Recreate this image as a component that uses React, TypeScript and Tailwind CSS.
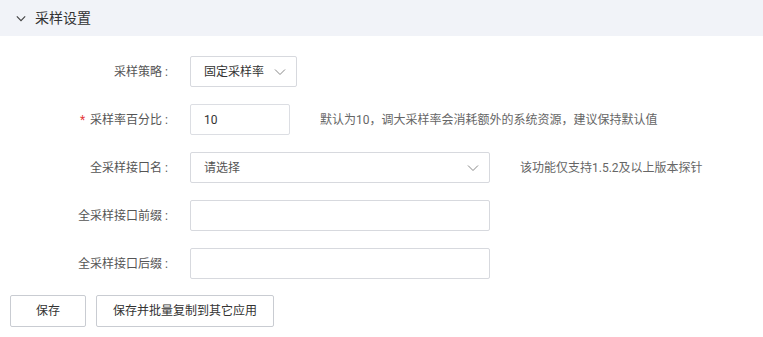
import React from "react";

const Chevron = ({ className, sw = 1 }: { className?: string; sw?: number }) => (
  <svg className={className} width="12" height="8" viewBox="0 0 12 8" fill="none">
    <path d="M1 1.5 L6 6.5 L11 1.5" stroke="currentColor" strokeWidth={sw} />
  </svg>
);

const Row = ({
  label,
  required,
  children,
}: {
  label: string;
  required?: boolean;
  children: React.ReactNode;
}) => (
  <div className="flex items-center h-[31px]">
    <div className="w-[168px] shrink-0 text-right text-[12px] text-[#555]">
      {required && <span className="text-[#e4393c] mr-[5px]">*</span>}
      {label}
      <span className="ml-[3px]">:</span>
    </div>
    <div className="ml-[22px] flex items-center">{children}</div>
  </div>
);

export default function App() {
  return (
    <div
      className="w-[763px] h-[337px] bg-white overflow-hidden"
      style={{ fontFamily: '"Roboto", "Noto Sans CJK SC", sans-serif' }}
    >
      <div className="h-[36px] bg-[#f1f3f8] flex items-center pl-[16px]">
        <Chevron className="text-[#444] w-[10px] h-[7px]" sw={1.4} />
        <span className="ml-[9px] text-[14px] text-[#333]">采样设置</span>
      </div>
      <div className="pt-[20px] flex flex-col gap-[17px]">
        <Row label="采样策略">
          <div className="w-[107px] h-[31px] border border-[#d7d9de] rounded-[2px] flex items-center justify-between pl-[13px] pr-[10px] text-[12px] text-[#333]">
            <span>固定采样率</span>
            <Chevron className="text-[#888]" />
          </div>
        </Row>
        <Row label="采样率百分比" required>
          <div className="w-[100px] h-[31px] border border-[#dcdee3] rounded-[2px] flex items-center pl-[13px] text-[12px] text-[#333]">
            10
          </div>
          <span className="ml-[30px] text-[12px] text-[#666]">
            默认为10，调大采样率会消耗额外的系统资源，建议保持默认值
          </span>
        </Row>
        <Row label="全采样接口名">
          <div className="w-[300px] h-[31px] border border-[#d7d9de] rounded-[2px] flex items-center justify-between pl-[13px] pr-[10px] text-[12px] text-[#555]">
            <span>请选择</span>
            <Chevron className="text-[#888]" />
          </div>
          <span className="ml-[30px] text-[12px] text-[#666]">
            该功能仅支持1.5.2及以上版本探针
          </span>
        </Row>
        <Row label="全采样接口前缀">
          <div className="w-[300px] h-[31px] border border-[#d7d9de] rounded-[2px]" />
        </Row>
        <Row label="全采样接口后缀">
          <div className="w-[300px] h-[31px] border border-[#d7d9de] rounded-[2px]" />
        </Row>
      </div>
      <div className="flex gap-[10px] pl-[10px] mt-[16px]">
        <button className="w-[76px] h-[32px] border border-[#c9ccd2] rounded-[2px] text-[12px] text-[#333] bg-white">
          保存
        </button>
        <button className="w-[178px] h-[32px] border border-[#c9ccd2] rounded-[2px] text-[12px] text-[#333] bg-white">
          保存并批量复制到其它应用
        </button>
      </div>
    </div>
  );
}
